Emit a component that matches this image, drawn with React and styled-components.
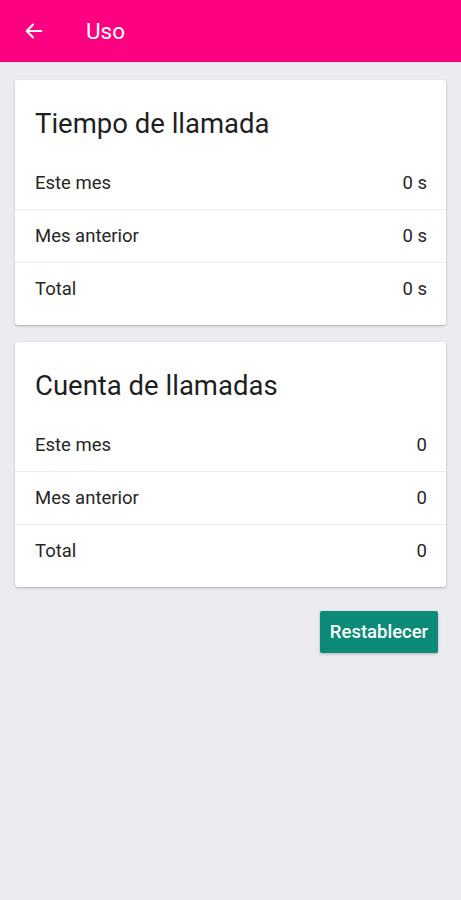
import React from "react";
import styled, { createGlobalStyle } from "styled-components";

const GlobalStyle = createGlobalStyle`
  html, body {
    margin: 0;
    padding: 0;
    background: #ebebf0;
    font-family: Roboto, "Liberation Sans", sans-serif;
  }
`;

const Page = styled.div`
  min-height: 900px;
  background: #ebebf0;
`;

const AppBar = styled.header`
  height: 62px;
  background: #ff0080;
  display: flex;
  align-items: center;
  padding-left: 22px;
  box-sizing: border-box;
`;

const BackButton = styled.div`
  width: 24px;
  height: 24px;
  display: flex;
  align-items: center;
  justify-content: center;
`;

const Title = styled.h1`
  margin: 0 0 0 40px;
  color: #fff;
  font-size: 22.5px;
  font-weight: 400;
`;

const Content = styled.main`
  padding: 18px 15px 0;
  display: flex;
  flex-direction: column;
  gap: 17px;
`;

const Card = styled.section`
  background: #fff;
  border-radius: 3px;
  box-shadow: 0 1px 3px rgba(0, 0, 0, 0.2), 0 1px 1px rgba(0, 0, 0, 0.08);
  padding-bottom: 10px;
`;

const CardTitle = styled.h2`
  margin: 0;
  height: 76px;
  padding: 10px 20px 0;
  display: flex;
  align-items: center;
  box-sizing: border-box;
  font-size: 27.5px;
  font-weight: 400;
  color: #1f1f1f;
`;

const Row = styled.div`
  height: 53px;
  display: flex;
  align-items: center;
  justify-content: space-between;
  padding: 0 19px 0 20px;
  font-size: 18.5px;
  color: #262626;
  border-top: ${(p) => (p.$first ? "none" : "1px solid #ececec")};
  box-sizing: border-box;
`;

const Actions = styled.div`
  display: flex;
  justify-content: flex-end;
  padding: 24px 23px 0 0;
`;

const Button = styled.button`
  background: #0b8a78;
  color: #fff;
  border: none;
  border-radius: 2px;
  height: 42px;
  width: 118px;
  padding: 0;
  font-family: Roboto, "Liberation Sans", sans-serif;
  font-size: 18.5px;
  font-weight: 500;
  box-shadow: 0 1px 3px rgba(0, 0, 0, 0.25);
`;

const StatCard = ({ title, rows }) => (
  <Card>
    <CardTitle>{title}</CardTitle>
    {rows.map((r, i) => (
      <Row key={r.label} $first={i === 0}>
        <span>{r.label}</span>
        <span>{r.value}</span>
      </Row>
    ))}
  </Card>
);

export default function App() {
  return (
    <Page>
      <GlobalStyle />
      <AppBar>
        <BackButton>
          <svg width="22" height="22" viewBox="0 0 24 24" fill="none">
            <path
              d="M20 12H5M11 5l-7 7 7 7"
              stroke="#fff"
              strokeWidth="2.2"
              strokeLinecap="round"
              strokeLinejoin="round"
            />
          </svg>
        </BackButton>
        <Title>Uso</Title>
      </AppBar>
      <Content>
        <StatCard
          title="Tiempo de llamada"
          rows={[
            { label: "Este mes", value: "0 s" },
            { label: "Mes anterior", value: "0 s" },
            { label: "Total", value: "0 s" },
          ]}
        />
        <StatCard
          title="Cuenta de llamadas"
          rows={[
            { label: "Este mes", value: "0" },
            { label: "Mes anterior", value: "0" },
            { label: "Total", value: "0" },
          ]}
        />
      </Content>
      <Actions>
        <Button>Restablecer</Button>
      </Actions>
    </Page>
  );
}
